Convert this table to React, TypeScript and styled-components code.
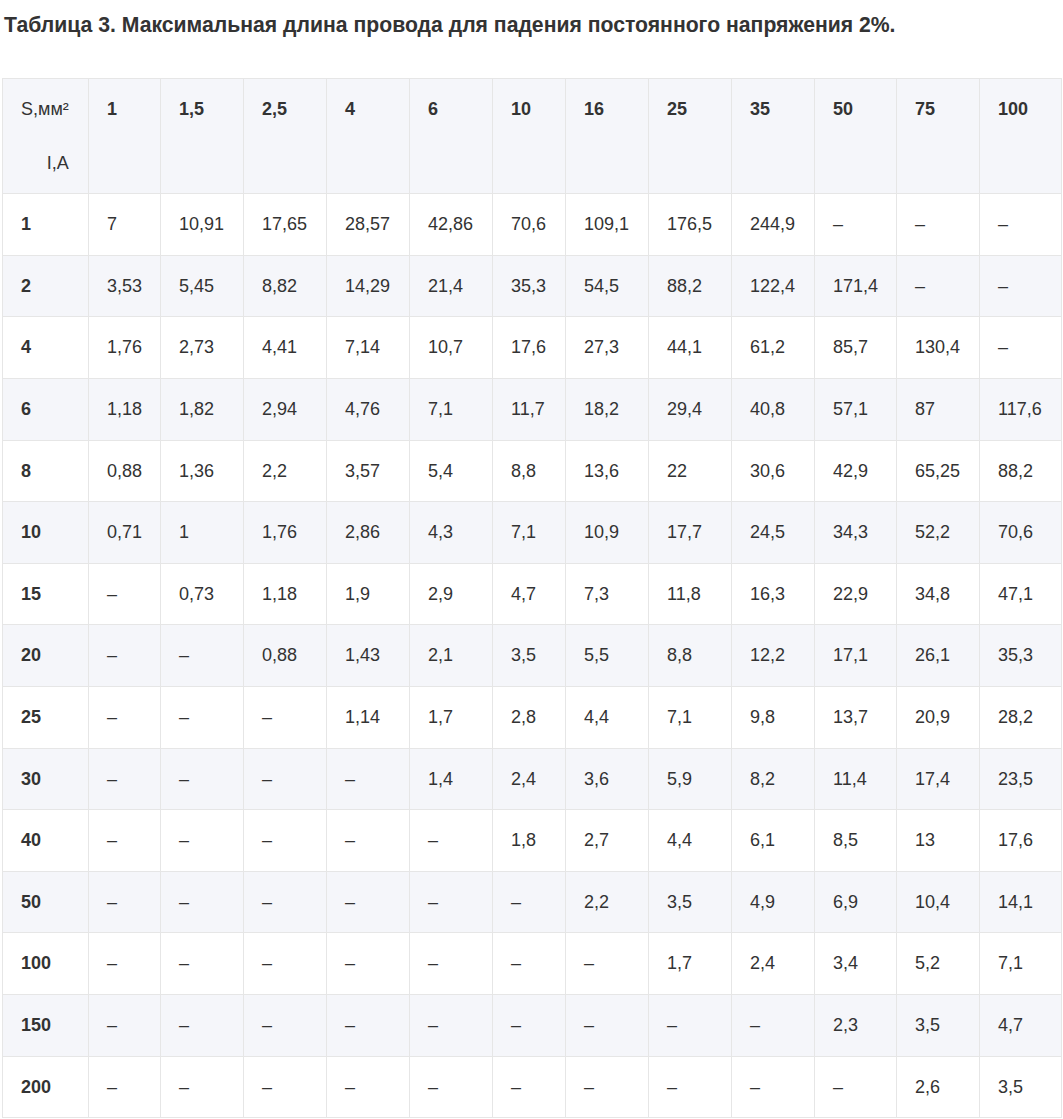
import React from "react";
import styled, { createGlobalStyle } from "styled-components";

const GlobalStyle = createGlobalStyle`
  html, body {
    margin: 0;
    padding: 0;
    background: #ffffff;
  }
  body {
    font-family: "Liberation Sans", Arial, sans-serif;
    color: #333333;
  }
`;

const Page = styled.div`
  display: flex;
  flex-direction: column;
  padding: 0 2px;
`;

const Title = styled.h3`
  margin: 11px 0 0 2px;
  font-size: 21.2px;
  line-height: 28px;
  font-weight: 700;
  color: #333333;
  white-space: nowrap;
`;

const Table = styled.table`
  margin-top: 39px;
  width: 1060px;
  border-collapse: collapse;
  table-layout: fixed;
  font-size: 18px;
  line-height: 24.6px;
  color: #333333;
`;

const Row = styled.tr<{ $shaded: boolean }>`
  background: ${(p) => (p.$shaded ? "#f5f6fa" : "#ffffff")};
`;

const Cell = styled.td<{ $bold?: boolean; $top?: boolean }>`
  border: 1px solid #e6e6e6;
  padding: 18px 18px;
  font-weight: ${(p) => (p.$bold ? 700 : 400)};
  vertical-align: ${(p) => (p.$top ? "top" : "middle")};
  white-space: nowrap;
`;

const Corner = styled.div`
  display: inline-flex;
  flex-direction: column;
  align-items: flex-end;
  gap: 29px;
  font-weight: 400;
`;

const widths = [86, 72, 83, 83, 83, 83, 73, 83, 83, 83, 82, 83, 82];

const sections = ["1", "1,5", "2,5", "4", "6", "10", "16", "25", "35", "50", "75", "100"];

const D = "–";

const rows: [string, string[]][] = [
  ["1", ["7", "10,91", "17,65", "28,57", "42,86", "70,6", "109,1", "176,5", "244,9", D, D, D]],
  ["2", ["3,53", "5,45", "8,82", "14,29", "21,4", "35,3", "54,5", "88,2", "122,4", "171,4", D, D]],
  ["4", ["1,76", "2,73", "4,41", "7,14", "10,7", "17,6", "27,3", "44,1", "61,2", "85,7", "130,4", D]],
  ["6", ["1,18", "1,82", "2,94", "4,76", "7,1", "11,7", "18,2", "29,4", "40,8", "57,1", "87", "117,6"]],
  ["8", ["0,88", "1,36", "2,2", "3,57", "5,4", "8,8", "13,6", "22", "30,6", "42,9", "65,25", "88,2"]],
  ["10", ["0,71", "1", "1,76", "2,86", "4,3", "7,1", "10,9", "17,7", "24,5", "34,3", "52,2", "70,6"]],
  ["15", [D, "0,73", "1,18", "1,9", "2,9", "4,7", "7,3", "11,8", "16,3", "22,9", "34,8", "47,1"]],
  ["20", [D, D, "0,88", "1,43", "2,1", "3,5", "5,5", "8,8", "12,2", "17,1", "26,1", "35,3"]],
  ["25", [D, D, D, "1,14", "1,7", "2,8", "4,4", "7,1", "9,8", "13,7", "20,9", "28,2"]],
  ["30", [D, D, D, D, "1,4", "2,4", "3,6", "5,9", "8,2", "11,4", "17,4", "23,5"]],
  ["40", [D, D, D, D, D, "1,8", "2,7", "4,4", "6,1", "8,5", "13", "17,6"]],
  ["50", [D, D, D, D, D, D, "2,2", "3,5", "4,9", "6,9", "10,4", "14,1"]],
  ["100", [D, D, D, D, D, D, D, "1,7", "2,4", "3,4", "5,2", "7,1"]],
  ["150", [D, D, D, D, D, D, D, D, D, "2,3", "3,5", "4,7"]],
  ["200", [D, D, D, D, D, D, D, D, D, D, "2,6", "3,5"]],
];

export default function App() {
  return (
    <>
      <GlobalStyle />
      <Page>
        <Title>Таблица 3. Максимальная длина провода для падения постоянного напряжения 2%.</Title>
        <Table>
          <colgroup>
            {widths.map((w, i) => (
              <col key={i} style={{ width: w }} />
            ))}
          </colgroup>
          <thead>
            <Row $shaded>
              <Cell $top>
                <Corner>
                  <span>S,мм²</span>
                  <span>I,A</span>
                </Corner>
              </Cell>
              {sections.map((s) => (
                <Cell key={s} $bold $top>
                  {s}
                </Cell>
              ))}
            </Row>
          </thead>
          <tbody>
            {rows.map(([current, values], i) => (
              <Row key={current} $shaded={i % 2 === 1}>
                <Cell $bold>{current}</Cell>
                {values.map((v, j) => (
                  <Cell key={j}>{v}</Cell>
                ))}
              </Row>
            ))}
          </tbody>
        </Table>
      </Page>
    </>
  );
}
